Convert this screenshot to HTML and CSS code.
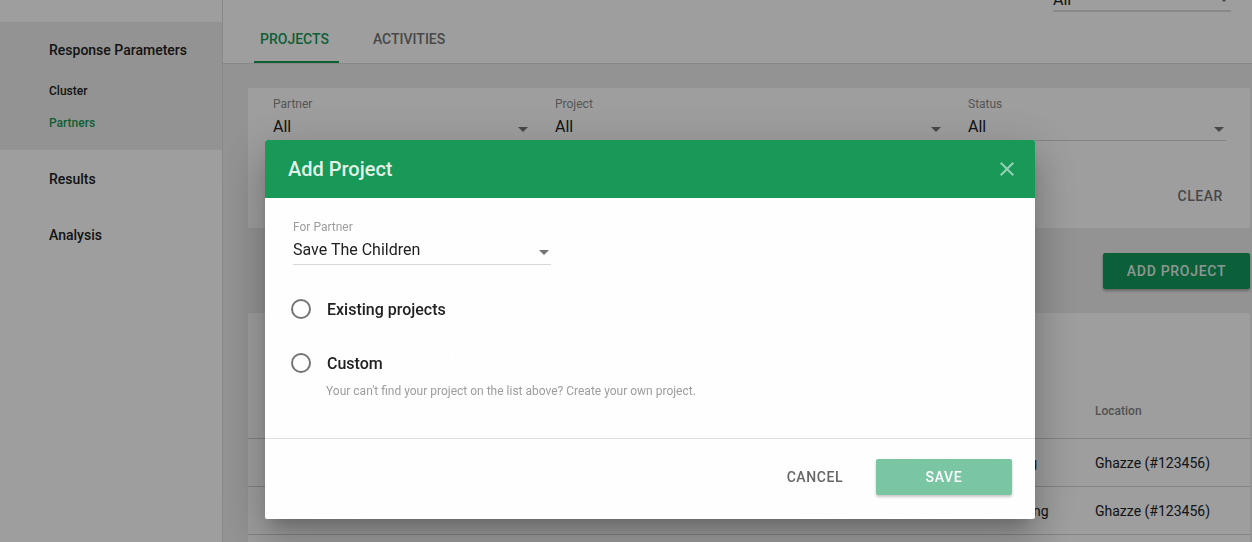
FILE: index.html
```html
<!DOCTYPE html>
<html>
<head>
<meta charset="utf-8">
<link rel="stylesheet" href="styles.css">
</head>
<body>
<div class="app">
  <aside class="sidebar">
    <div class="side-top"></div>
    <div class="side-group">
      <div class="side-title">Response Parameters</div>
      <div class="side-sub first">Cluster</div>
      <div class="side-sub active">Partners</div>
    </div>
    <div class="side-item">Results</div>
    <div class="side-item">Analysis</div>
  </aside>
  <main class="main">
    <div class="topbar">
      <div class="top-select"><span>All</span><i class="arrow"></i></div>
    </div>
    <nav class="tabs">
      <div class="tab active">PROJECTS</div>
      <div class="tab">ACTIVITIES</div>
    </nav>
    <div class="content">
      <section class="card filters">
        <div class="filter-grid">
          <div class="field"><div class="f-label">Partner</div><div class="f-value"><span>All</span><i class="arrow"></i></div></div>
          <div class="field"><div class="f-label">Project</div><div class="f-value"><span>All</span><i class="arrow"></i></div></div>
          <div class="field"><div class="f-label">Status</div><div class="f-value"><span>All</span><i class="arrow"></i></div></div>
        </div>
        <div class="filter-actions"><button class="flat">CLEAR</button></div>
      </section>
      <div class="actions-row"><button class="raised">ADD PROJECT</button></div>
      <section class="card table-card">
        <div class="table-title">1-10 of 12 results to show</div>
        <div class="trow thead">
          <div></div><div>Project</div><div>Cluster</div><div>Partner</div><div>Status</div><div>Location</div>
        </div>
        <div class="trow">
          <div></div><div>Project 1</div><div>WASH</div><div>Partner X</div><div>Ongoing</div><div>Ghazze (#123456)</div>
        </div>
        <div class="trow">
          <div></div><div>Project 2</div><div>WASH</div><div>Partner X</div><div>Upcoming</div><div>Ghazze (#123456)</div>
        </div>
      </section>
    </div>
  </main>
</div>

<div class="backdrop"></div>

<div class="dialog">
  <header class="dlg-head">
    <h2 class="dlg-title">Add Project</h2>
    <button class="close" aria-label="close">
      <svg width="24" height="24" viewBox="0 0 24 24"><path d="M19 6.41L17.59 5 12 10.59 6.41 5 5 6.41 10.59 12 5 17.59 6.41 19 12 13.41 17.59 19 19 17.59 13.41 12z" fill="currentColor"/></svg>
    </button>
  </header>
  <div class="dlg-body">
    <div class="dlg-field">
      <div class="d-label">For Partner</div>
      <div class="d-value"><span>Save The Children</span><i class="arrow"></i></div>
    </div>
    <div class="radios">
      <label class="radio-row"><span class="radio"></span><span class="r-label">Existing projects</span></label>
      <label class="radio-row second"><span class="radio"></span><span class="r-label">Custom</span></label>
      <div class="hint">Your can't find your project on the list above? Create your own project.</div>
    </div>
  </div>
  <footer class="dlg-foot">
    <button class="cancel">CANCEL</button>
    <button class="save">SAVE</button>
  </footer>
</div>
</body>
</html>
```

FILE: styles.css
```css
* { box-sizing: border-box; }
html, body { margin: 0; padding: 0; }
body {
  font-family: Roboto, "Noto Sans", Arial, sans-serif;
  color: #212121;
  width: 1252px;
  height: 542px;
  overflow: hidden;
  background: #fff;
}
button { font-family: inherit; border: 0; background: none; cursor: pointer; padding: 0; }

.app {
  display: grid;
  grid-template-columns: 223px 1fr;
  height: 542px;
  overflow: hidden;
}

/* sidebar */
.sidebar {
  background: #fff;
  border-right: 1px solid #dcdcdc;
}
.side-top { height: 22px; }
.side-group {
  background: #eeeeee;
  height: 128px;
  padding: 18px 0 0 49px;
}
.side-title {
  font-size: 14px;
  font-weight: 500;
  line-height: 20px;
  color: #212121;
}
.side-sub {
  font-size: 12px;
  font-weight: 500;
  line-height: 16px;
  color: #212121;
  margin-top: 16px;
}
.side-sub.first { margin-top: 23px; }
.side-sub.active { color: #189a58; }
.side-item {
  height: 56px;
  display: flex;
  align-items: center;
  padding-left: 49px;
  font-size: 14px;
  font-weight: 500;
  color: #212121;
}
.side-group + .side-item { margin-top: 1px; }

/* main */
.main { background: #eeeeee; display: flex; flex-direction: column; overflow: hidden; }
.main > * { flex-shrink: 0; }
.topbar {
  height: 22px;
  background: #fff;
  display: flex;
  justify-content: flex-end;
  padding-right: 21px;
}
.top-select {
  width: 178px;
  height: 22px;
  margin-top: -10px;
  border-bottom: 2px solid #dedede;
  display: flex;
  justify-content: space-between;
  align-items: flex-end;
  font-size: 16px;
  line-height: 20px;
}
.top-select .arrow { margin-right: 2px; margin-bottom: 8px; }

.tabs {
  background: #fff;
  display: flex;
  gap: 18px;
  padding-left: 31px;
  border-bottom: 1px solid #dadada;
  height: 42px;
}
.tab {
  height: 41px;
  padding: 9px 8px 0 6px;
  font-size: 14px;
  font-weight: 500;
  line-height: 16px;
  color: #757575;
}
.tab.active {
  color: #189a58;
  border-bottom: 2px solid #189a58;
  padding-right: 10px;
}
.tab + .tab { padding-left: 16px; }

.content {
  padding: 24px 2px 0 25px;
  display: flex;
  flex-direction: column;
}
.content > * { flex-shrink: 0; }
.card { background: #fff; border-radius: 2px; }

.filters { padding: 9px 24px 14px 25px; height: 140px; }
.filter-grid {
  display: grid;
  grid-template-columns: 257px 388px 1fr;
  column-gap: 25px;
}
.f-label { font-size: 12px; line-height: 14px; color: #8a8a8a; }
.f-value {
  margin-top: 6px;
  font-size: 16px;
  line-height: 20px;
  padding-bottom: 3px;
  border-bottom: 1px solid #d6d6d6;
  display: flex;
  justify-content: space-between;
  align-items: center;
  color: #212121;
}
.f-value .arrow { margin-right: 2px; margin-top: 4px; }

.arrow {
  width: 0; height: 0;
  border-left: 5px solid transparent;
  border-right: 5px solid transparent;
  border-top: 5px solid #757575;
  display: inline-block;
}

.filter-actions { display: flex; justify-content: flex-end; margin-top: 37px; }
.flat {
  font-size: 14px;
  font-weight: 500;
  letter-spacing: 0.04em;
  color: #757575;
  height: 36px;
  padding: 0 3px 0 8px;
}

.actions-row { display: flex; justify-content: flex-end; margin-top: 25px; }
.raised {
  width: 147px;
  height: 36px;
  background: #139c5c;
  color: rgba(255,255,255,0.9);
  font-size: 14px;
  font-weight: 500;
  letter-spacing: 0.05em;
  border-radius: 2px;
  box-shadow: 0 2px 3px rgba(0,0,0,0.3);
}

.table-card { margin-top: 24px; padding-top: 30px; height: 240px; }
.table-title { padding-left: 25px; font-size: 18px; line-height: 20px; color: #212121; }
.trow {
  display: grid;
  grid-template-columns: 65px 490px 89px 93px 110px 1fr;
  height: 48px;
  align-items: center;
  border-bottom: 1px solid #d4d4d4;
  font-size: 14px;
  color: #212121;
}
.trow.thead { height: 56px; margin-top: 20px; font-size: 12px; font-weight: 500; color: #858585; }

/* overlay */
.backdrop {
  position: fixed;
  inset: 0;
  background: rgba(0,0,0,0.38);
}

.dialog {
  position: fixed;
  left: 265px;
  top: 140px;
  width: 770px;
  height: 379px;
  background: #fff;
  border-radius: 2px;
  opacity: 0.993;
  display: flex;
  flex-direction: column;
  box-shadow: 0 11px 15px -7px rgba(0,0,0,0.2), 0 24px 38px 3px rgba(0,0,0,0.14), 0 9px 46px 8px rgba(0,0,0,0.12);
}
.dlg-head {
  height: 58px;
  flex-shrink: 0;
  background: #189a58;
  display: flex;
  align-items: center;
  justify-content: space-between;
  padding: 0 16px 0 23px;
  border-radius: 2px 2px 0 0;
}
.dlg-title {
  margin: 0;
  font-size: 20px;
  font-weight: 500;
  color: rgba(255,255,255,0.9);
  line-height: 24px;
}
.close { color: rgba(255,255,255,0.55); width: 24px; height: 24px; display: block; }
.close svg { display: block; }

.dlg-body { padding: 22px 28px 40px 28px; }
.d-label { font-size: 12px; line-height: 14px; color: #9e9e9e; }
.d-value {
  width: 258px;
  margin-top: 6px;
  font-size: 16px;
  line-height: 20px;
  padding-bottom: 4px;
  border-bottom: 1px solid #d9d9d9;
  display: flex;
  justify-content: space-between;
  align-items: center;
  color: #212121;
}
.d-value .arrow { margin-right: 2px; margin-top: 5px; }

.radios { margin-top: 24px; }
.radio-row {
  height: 40px;
  display: flex;
  align-items: center;
  gap: 16px;
  margin-left: -2px;
}
.radio-row.second { margin-top: 14px; }
.radio {
  width: 20px;
  height: 20px;
  border: 2px solid #757575;
  border-radius: 50%;
  flex: none;
}
.r-label { font-size: 16px; font-weight: 500; color: #212121; }
.hint {
  margin-top: 1px;
  padding-left: 33px;
  font-size: 12px;
  line-height: 14px;
  color: #9e9e9e;
}

.dlg-foot {
  border-top: 1px solid #e0e0e0;
  padding: 20px 23px 24px;
  display: flex;
  justify-content: flex-end;
  gap: 17px;
}
.cancel {
  height: 36px;
  padding: 0 16px;
  font-size: 14px;
  font-weight: 500;
  letter-spacing: 0.04em;
  color: #666;
}
.save {
  width: 136px;
  height: 36px;
  background: #7ac7a4;
  color: #fff;
  font-size: 14px;
  font-weight: 500;
  letter-spacing: 0.05em;
  border-radius: 2px;
  box-shadow: 0 2px 3px rgba(0,0,0,0.22);
}
```
